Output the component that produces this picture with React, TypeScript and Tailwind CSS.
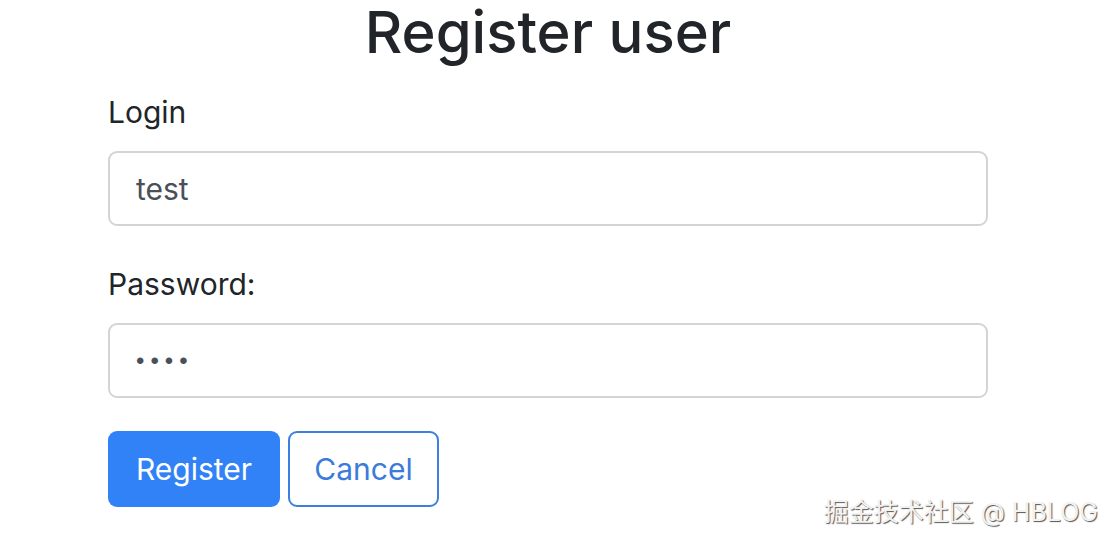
import React from 'react';

const font = { fontFamily: 'Inter, "Noto Sans", sans-serif' };

const Field: React.FC<{ label: string; type: string; value: string; top: string; inputFont: string }> = ({
  label,
  type,
  value,
  top,
  inputFont,
}) => (
  <div className={top}>
    <label className="block text-[30px] leading-[30px] text-[#212529]">{label}</label>
    <input
      type={type}
      value={value}
      readOnly
      className={`mt-[24px] block h-[75px] w-full rounded-[9px] border-2 border-[#d4d4d4] bg-white px-[26px] text-[#495057] outline-none ${inputFont}`}
    />
  </div>
);

export default function App() {
  return (
    <div className="relative h-[542px] w-[1116px] overflow-hidden bg-white" style={font}>
      <div className="ml-[108px] w-[880px]">
        <h1 className="pt-[2px] text-center text-[58px] font-medium leading-[60px] text-[#212529]">Register user</h1>
        <Field label="Login" type="text" value="test" top="mt-[35px]" inputFont="text-[30px]" />
        <Field
          label="Password:"
          type="password"
          value="test"
          top="mt-[43px]"
          inputFont="text-[24px] tracking-[6px] text-[#5a5a5a] [font-family:'Liberation_Sans',Arial,sans-serif]"
        />
        <div className="mt-[33px] flex gap-[8px]">
          <button className="h-[76px] w-[172px] rounded-[9px] bg-[#3182f6] text-[30px] text-white">Register</button>
          <button className="h-[76px] w-[151px] rounded-[9px] border-2 border-[#3d7fdf] bg-white text-[30px] text-[#3a7bdc]">Cancel</button>
        </div>
      </div>
      <div
        className="absolute right-[18px] bottom-[17px] text-[25px] leading-[26px] text-[#f2f2f2] [text-shadow:1px_1px_1px_#555]"
        style={{ fontFamily: 'Inter, "Noto Sans CJK SC", sans-serif' }}
      >
        掘金技术社区 @ HBLOG
      </div>
    </div>
  );
}
